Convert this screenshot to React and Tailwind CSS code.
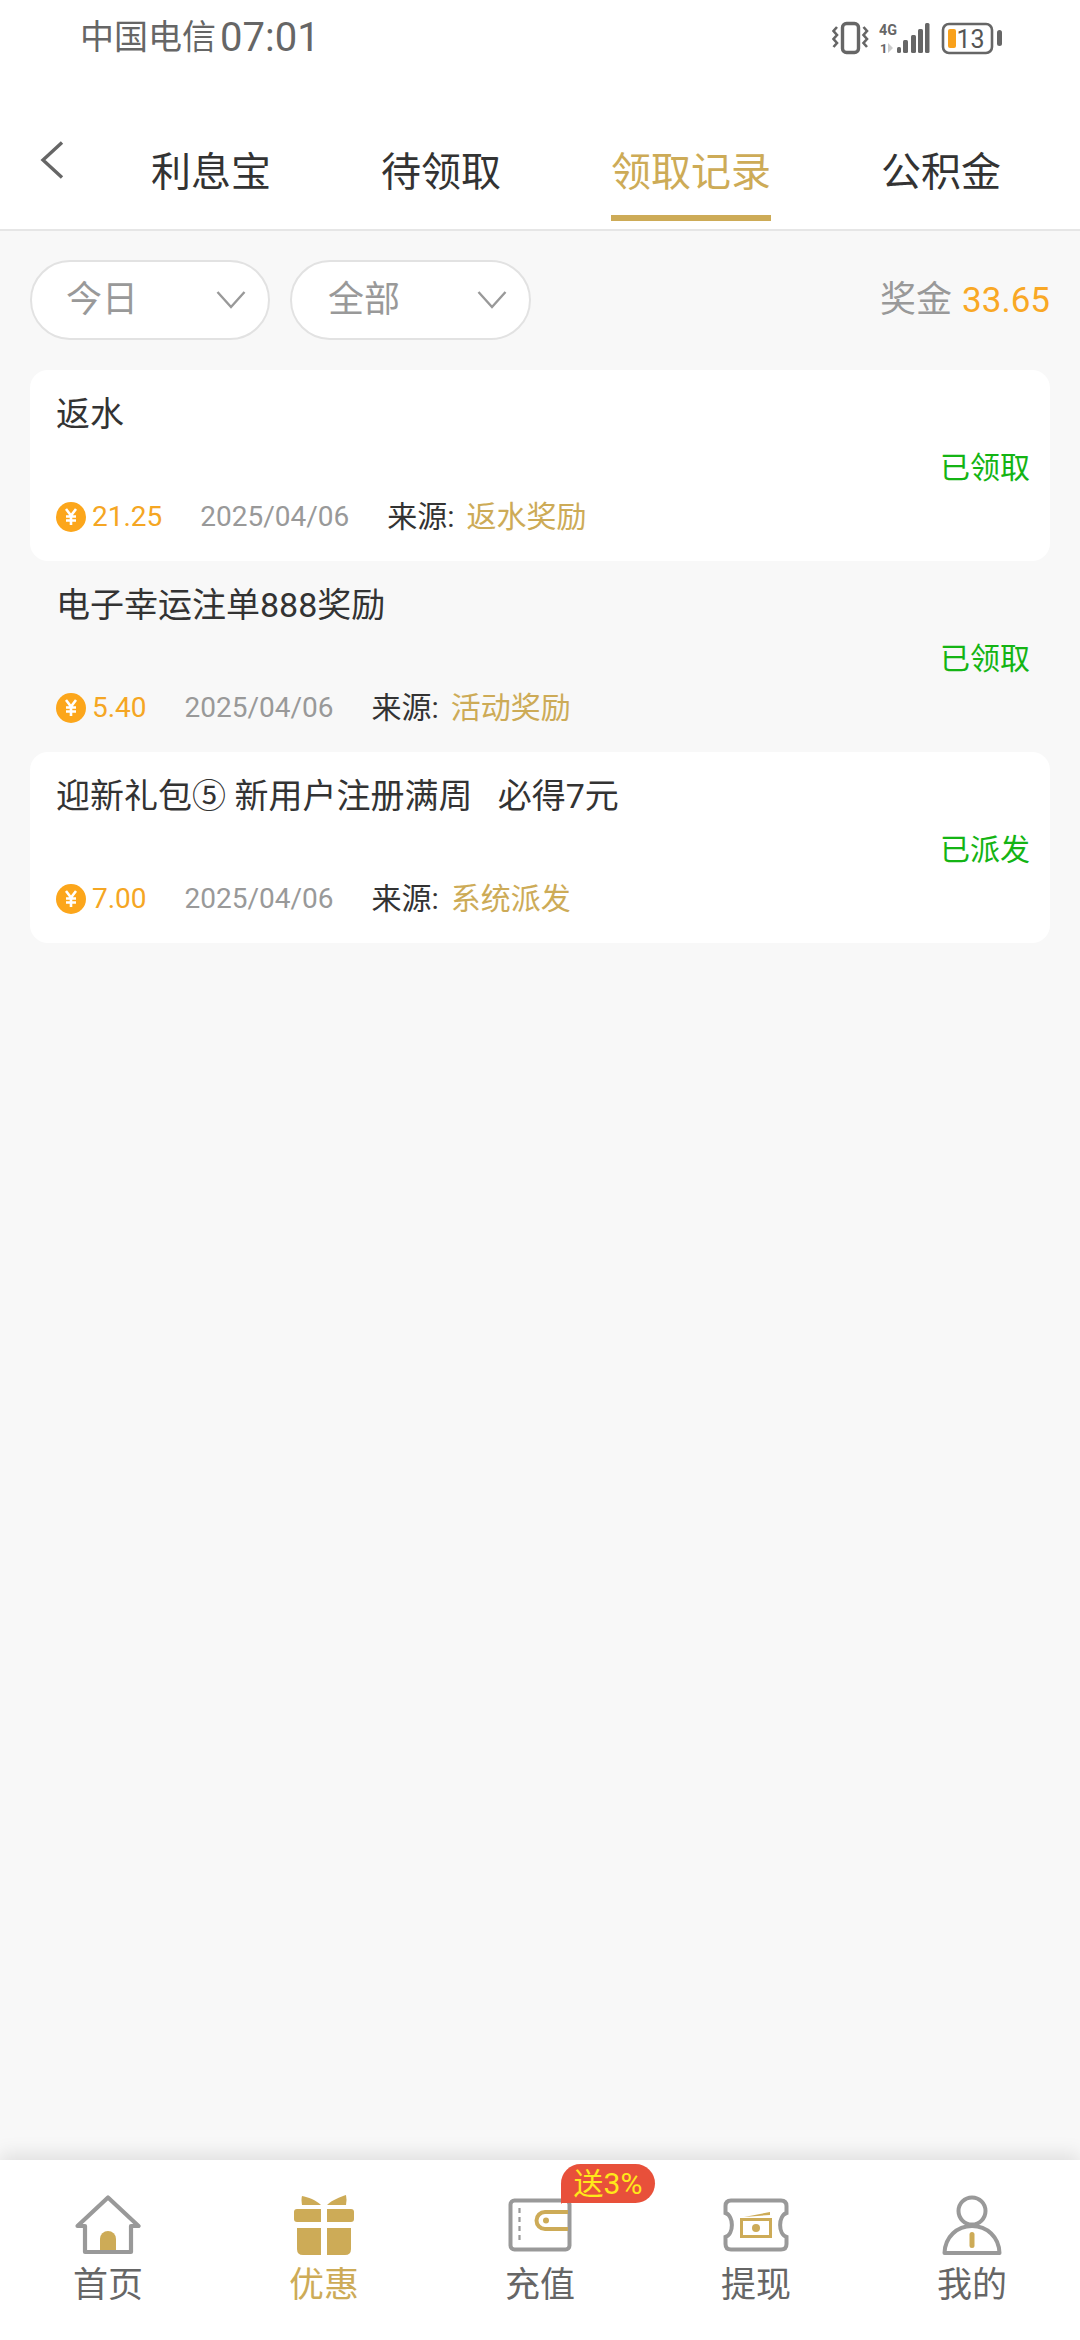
const gold = '#cdab57';

const records = [
  { title: '返水', status: '已领取', amount: '21.25', source: '返水奖励', card: true },
  { title: '电子幸运注单888奖励', status: '已领取', amount: '5.40', source: '活动奖励', card: false },
  { title: '迎新礼包⑤ 新用户注册满周\u00a0\u00a0\u00a0必得7元', status: '已派发', amount: '7.00', source: '系统派发', card: true },
];

function StatusIcons() {
  return (
    <svg width="172" height="36" viewBox="0 0 172 36" fill="none">
      {/* vibrate */}
      <rect x="10.5" y="3.5" width="16" height="29" rx="4" stroke="#666" strokeWidth="3.4" />
      <path d="M5 7 L1.5 11 L5 15 L1.5 19 L5 23 L1.5 27" stroke="#666" strokeWidth="2.6" />
      <path d="M31.5 7 L35 11 L31.5 15 L35 19 L31.5 23 L35 27" stroke="#666" strokeWidth="2.6" />
      {/* network */}
      <text x="47" y="15" fontSize="14" fontWeight="700" fill="#666" fontFamily="Roboto, sans-serif" textLength="18" lengthAdjust="spacingAndGlyphs">4G</text>
      <text x="48" y="33" fontSize="13" fontWeight="700" fill="#666" fontFamily="Roboto, sans-serif">1</text>
      <path d="M56 23 L56 33 L61 28 Z" fill="#ccc" />
      <rect x="65" y="27" width="4" height="6" rx="1.5" fill="#666" />
      <rect x="71" y="20" width="5" height="13" rx="1.5" fill="#666" />
      <rect x="79" y="15" width="5" height="18" rx="1.5" fill="#666" />
      <rect x="86" y="9" width="5" height="24" rx="1.5" fill="#666" />
      <rect x="93" y="3" width="4.5" height="30" rx="1.5" fill="#666" />
      {/* battery */}
      <rect x="111" y="4" width="49" height="29" rx="6" stroke="#666" strokeWidth="2.6" />
      <rect x="116" y="9" width="8" height="19" rx="2" fill="#f9a11b" />
      <text x="124.5" y="27.5" fontSize="25" fill="#555" fontFamily="Roboto, sans-serif">13</text>
      <rect x="165" y="10" width="5" height="16" rx="2.5" fill="#666" />
    </svg>
  );
}

function Chevron() {
  return (
    <svg width="30" height="20" viewBox="0 0 30 20" fill="none">
      <path d="M1.5 2 L15 17 L28.5 2" stroke="#999" strokeWidth="2.4" />
    </svg>
  );
}

function Coin() {
  return (
    <svg width="30" height="30" viewBox="0 0 30 30">
      <circle cx="15" cy="15" r="15" fill="#fca61b" />
      <path d="M10 7 L15 13.5 L20 7 M15 13.5 L15 23 M10 14.5 L20 14.5 M10 18.5 L20 18.5" stroke="#fff" strokeWidth="2.6" fill="none" />
    </svg>
  );
}

function HomeIcon() {
  return (
    <svg width="66" height="60" viewBox="0 0 66 60" fill="none">
      <path d="M25 58 L25 44 a8 8 0 0 1 16 0 L41 58 Z" fill={gold} />
      <path d="M2.5 31 L33 2.5 L63.5 31 L56 31 L56 57 L10 57 L10 31 Z" stroke="#999" strokeWidth="4.2" strokeLinejoin="round" />
    </svg>
  );
}

function GiftIcon() {
  return (
    <svg width="60" height="60" viewBox="0 0 60 60" fill={gold}>
      <path d="M8 1 C14 2 22 5 27 10 L8 10 Q7 4 8 1 Z" />
      <path d="M52 0 C46 2 38 5 33 10 L52 10 Q53 4 52 0 Z" />
      <path d="M3 14 L27 14 L27 27 L3 27 Q0 27 0 24 L0 17 Q0 14 3 14 Z" />
      <path d="M33 14 L57 14 Q60 14 60 17 L60 24 Q60 27 57 27 L33 27 Z" />
      <path d="M3 33 L27 33 L27 60 L9 60 Q3 60 3 54 Z" />
      <path d="M33 33 L57 33 L57 54 Q57 60 51 60 L33 60 Z" />
    </svg>
  );
}

function WalletIcon() {
  return (
    <svg width="64" height="54" viewBox="0 0 64 54" fill="none">
      <rect x="2.5" y="2.5" width="59" height="49" rx="4" stroke="#999" strokeWidth="4" />
      <path d="M11.5 10 L11.5 42" stroke="#999" strokeWidth="2.2" strokeDasharray="5 4" />
      <path d="M60 14 L37 14 a8.5 8.5 0 0 0 0 17 L60 31" stroke={gold} strokeWidth="4" />
      <circle cx="38" cy="22.5" r="3" fill={gold} />
    </svg>
  );
}

function TicketIcon() {
  return (
    <svg width="66" height="54" viewBox="0 0 66 54" fill="none">
      <path d="M8 2.5 L58 2.5 Q63.5 2.5 63.5 8 L63.5 15 C55 18 55 36 63.5 39 L63.5 46 Q63.5 51.5 58 51.5 L8 51.5 Q2.5 51.5 2.5 46 L2.5 39 C11 36 11 18 2.5 15 L2.5 8 Q2.5 2.5 8 2.5 Z" stroke="#999" strokeWidth="4" />
      <path d="M21 19 L47 14 L47 17 Z" fill={gold} />
      <rect x="18.5" y="21.5" width="29" height="17" stroke={gold} strokeWidth="3" />
      <circle cx="33" cy="30" r="4" fill={gold} />
    </svg>
  );
}

function UserIcon() {
  return (
    <svg width="60" height="60" viewBox="0 0 60 60" fill="none">
      <circle cx="30" cy="16" r="13.5" stroke="#999" strokeWidth="4" />
      <path d="M2.5 58 C3 42 15 31 30 31 C45 31 57 42 57.5 58 Z" stroke="#999" strokeWidth="4" strokeLinejoin="round" fill="#fff" />
      <rect x="27.5" y="37" width="5" height="16" rx="2.5" fill={gold} />
    </svg>
  );
}

function NavItem({ label, active, children, badge }) {
  return (
    <div className="relative flex flex-col items-center">
      <div className="h-[60px] flex items-center justify-center">{children}</div>
      <span className={`mt-[8px] text-[35px] leading-[46px] ${active ? 'text-[#cdab57]' : 'text-[#666]'}`}>{label}</span>
      {badge && (
        <span className="absolute left-[129px] -top-[31px] w-[94px] h-[39px] rounded-full rounded-bl-none bg-[#e8503a] text-[#ffe81a] text-[30px] leading-[39px] text-center whitespace-nowrap">
          {badge}
          <span className="absolute left-0 top-[30px] w-0 h-0 border-l-[10px] border-l-[#e8503a] border-r-[10px] border-r-transparent border-b-[10px] border-b-transparent"></span>
        </span>
      )}
    </div>
  );
}

function RecordRow({ item }) {
  return (
    <div className={`h-[191px] rounded-[18px] px-[26px] pt-[22px] ${item.card ? 'bg-white' : ''}`}>
      <div className="text-[34px] leading-[44px] text-[#333] whitespace-nowrap">{item.title}</div>
      <div className="text-right text-[30px] leading-[40px] mt-[12px] -mr-[6px] text-[#14b414]">{item.status}</div>
      <div className="flex items-center mt-[9px] h-[40px] text-[30px] leading-[40px] whitespace-nowrap">
        <Coin />
        <span className="ml-[6px] text-[#f5a623] text-[28px]">{item.amount}</span>
        <span className="ml-[38px] text-[#999] text-[28px]">2025/04/06</span>
        <span className="ml-[38px] text-[#333]">来源:</span>
        <span className="ml-[12px] text-[#cdab57]">{item.source}</span>
      </div>
    </div>
  );
}

export default function App() {
  return (
    <div className="w-[1080px] h-[2340px] flex flex-col bg-[#f8f8f8] font-['Roboto','Noto_Sans_CJK_SC',sans-serif] overflow-hidden">
      {/* status bar + tabs */}
      <div className="h-[231px] bg-white border-b-2 border-[#e6e6e6] shrink-0">
        <div className="h-[75px] flex items-center justify-between pl-[80px] pr-[76px]">
          <div className="flex items-center text-[34px] text-[#666]">
            <span>中国电信</span>
            <span className="ml-[4px] text-[40px] leading-[44px]">07:01</span>
          </div>
          <StatusIcons />
        </div>
        <div className="flex pl-[40px] pt-[72px]">
          <svg width="24" height="38" viewBox="0 0 24 38" fill="none" className="-mt-[6px]">
            <path d="M22 1.5 L3 19 L22 36.5" stroke="#666" strokeWidth="3.4" />
          </svg>
          <div className="flex gap-[110px] ml-[87px] text-[40px] leading-[52px] text-[#333]">
            <span>利息宝</span>
            <span>待领取</span>
            <span className="relative text-[#cdab57]">
              领取记录
              <span className="absolute left-0 right-0 top-[68px] h-[6px] bg-[#cdab57]"></span>
            </span>
            <span>公积金</span>
          </div>
        </div>
      </div>

      {/* filters */}
      <div className="flex items-center px-[30px] pt-[29px] shrink-0">
        <div className="w-[240px] h-[80px] rounded-full bg-white border-2 border-[#e2e2e2] flex items-center justify-between pl-[34px] pr-[22px] text-[36px] text-[#999]">
          <span>今日</span>
          <Chevron />
        </div>
        <div className="ml-[20px] w-[241px] h-[80px] rounded-full bg-white border-2 border-[#e2e2e2] flex items-center justify-between pl-[36px] pr-[22px] text-[36px] text-[#999]">
          <span>全部</span>
          <Chevron />
        </div>
        <div className="ml-auto text-[36px] text-[#999]">
          奖金
          <span className="ml-[10px] text-[#f9a825] text-[35px]">33.65</span>
        </div>
      </div>

      {/* records */}
      <div className="flex-1 px-[30px] pt-[30px]">
        {records.map((item) => (
          <RecordRow key={item.title} item={item} />
        ))}
      </div>

      {/* tab bar */}
      <div className="relative h-[180px] shrink-0 bg-white pt-[35px] grid grid-cols-5 shadow-[0_-6px_18px_rgba(0,0,0,0.1)]">
        <NavItem label="首页"><HomeIcon /></NavItem>
        <NavItem label="优惠" active><GiftIcon /></NavItem>
        <NavItem label="充值" badge="送3%"><WalletIcon /></NavItem>
        <NavItem label="提现"><TicketIcon /></NavItem>
        <NavItem label="我的"><UserIcon /></NavItem>
      </div>
    </div>
  );
}
